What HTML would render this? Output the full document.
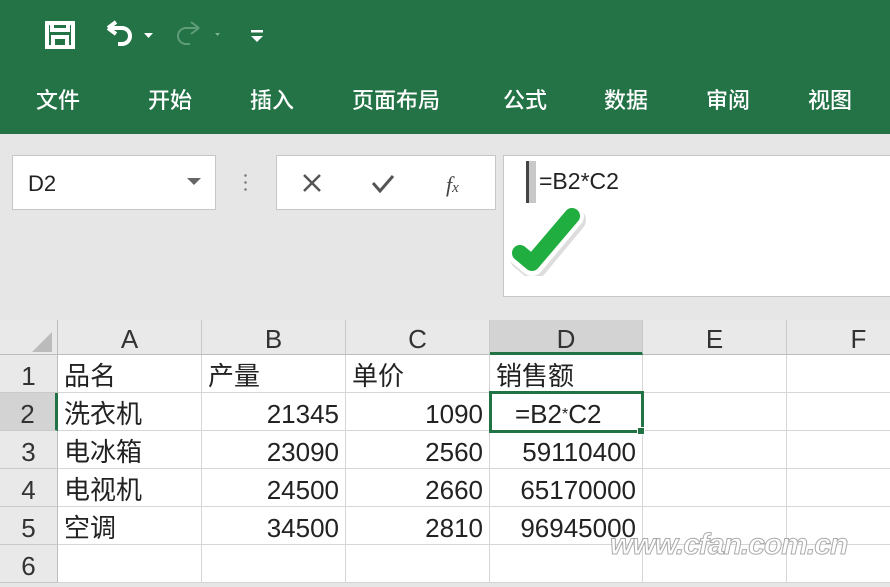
<!DOCTYPE html>
<html><head><meta charset="utf-8"><style>
*{margin:0;padding:0;box-sizing:border-box}
body{width:890px;height:578px;overflow:hidden;background:#e6e6e6;font-family:"Liberation Sans","Noto Sans CJK SC",sans-serif;position:relative}
.top{position:absolute;left:0;top:0;width:890px;height:134px;background:#237346}
.tab{position:absolute;top:83px;color:#fff;font-size:22px;font-weight:500;font-family:"Noto Sans CJK SC",sans-serif}
.box{position:absolute;background:#fff;border:1px solid #c6c6c6}
.ch{position:absolute;top:320px;height:35px;background:#e9e9e9;border-right:1px solid #c9c9c9;border-bottom:1px solid #bdbdbd;font-size:26px;color:#333;text-align:center;line-height:38px}
.rh{position:absolute;left:0;width:58px;height:38px;background:#e9e9e9;border-bottom:1px solid #c9c9c9;border-right:1px solid #bdbdbd;font-size:26px;color:#333;text-align:center;line-height:42px}
.c{position:absolute;height:38px;background:#fff;border-right:1px solid #d6d6d6;border-bottom:1px solid #d6d6d6;font-size:26px;color:#222;line-height:42px;padding:0 6px;white-space:nowrap;font-family:"Liberation Sans","Noto Sans CJK SC",sans-serif}
.r{text-align:right}
</style></head><body>
<div class="top">
<svg width="890" height="70" style="position:absolute;left:0;top:0">
<g fill="none" stroke="#fff" stroke-width="4">
<rect x="47" y="23" width="26" height="24"/><rect x="52" y="23" width="16" height="7"/><rect x="53" y="37" width="14" height="10"/></g>
<path d="M108 28 L116 22 M108 28 L116 34 M108 28 H122 a8 8 0 0 1 0 16 H118" stroke="#fff" stroke-width="4" fill="none"/>
<path d="M144 33 h9 l-4.5 5z" fill="#fff"/>
<path d="M199 28 L191 22 M199 28 L191 34 M199 28 H186 a8 8 0 0 0 0 16 H190" stroke="#5f9c7a" stroke-width="2" fill="none"/>
<path d="M215 33 h5 l-2.5 3z" fill="#7fb092"/>
<rect x="251" y="30" width="12" height="2.5" fill="#fff"/><path d="M251 36 h12 l-6 6z" fill="#fff"/>
</svg>
<div class="tab" style="left:36px">文件</div>
<div class="tab" style="left:148px">开始</div>
<div class="tab" style="left:250px">插入</div>
<div class="tab" style="left:352px">页面布局</div>
<div class="tab" style="left:503px">公式</div>
<div class="tab" style="left:604px">数据</div>
<div class="tab" style="left:706px">审阅</div>
<div class="tab" style="left:808px">视图</div>
</div>
<div class="box" style="left:12px;top:155px;width:204px;height:55px;font-size:22px;line-height:55px;padding-left:15px;color:#222">D2
<svg style="position:absolute;left:174px;top:22px" width="14" height="8"><path d="M0 0h14l-7 7z" fill="#666"/></svg></div>
<div style="position:absolute;left:244px;top:172px;width:3px;height:22px;background:radial-gradient(circle,#777 1px,transparent 1.5px) 0 0/3px 7px"></div>
<div class="box" style="left:276px;top:155px;width:220px;height:55px">
<svg width="220" height="55"><path d="M27 19l16 16M43 19L27 35" stroke="#555" stroke-width="2.5"/><path d="M96 27l7 8 13-15" stroke="#555" stroke-width="3" fill="none"/>
<text x="169" y="36" font-family="Liberation Serif,serif" font-style="italic" font-size="22" fill="#444">f<tspan font-size="15">x</tspan></text></svg></div>
<div class="box" style="left:503px;top:155px;width:400px;height:142px">
<div style="position:absolute;left:22px;top:5px;width:10px;height:42px;background:#c8c8c8;border-left:3px solid #444"></div>
<div style="position:absolute;left:35px;top:12px;font-size:23px;color:#222">=B2*C2</div>
<svg style="position:absolute;left:2px;top:40px" width="85" height="80"><path d="M16 62 L28 72 L68 24" stroke="#bbb" stroke-width="24" stroke-linecap="round" stroke-linejoin="round" fill="none" opacity=".5"/><path d="M14 58 L26 68 L66 20" stroke="#fff" stroke-width="24" stroke-linecap="round" stroke-linejoin="round" fill="none"/><path d="M14 57 L26 67 L66 20" stroke="#1fae3f" stroke-width="16" stroke-linecap="round" stroke-linejoin="round" fill="none"/></svg>
</div>
<div style="position:absolute;left:0;top:320px;width:58px;height:35px;background:#e9e9e9;border-right:1px solid #bdbdbd;border-bottom:1px solid #bdbdbd"><svg width="58" height="35"><path d="M52 32V12L32 32z" fill="#bbb"/></svg></div>
<div class="ch" style="left:58px;width:144px">A</div>
<div class="ch" style="left:202px;width:144px">B</div>
<div class="ch" style="left:346px;width:144px">C</div>
<div class="ch" style="left:490px;width:153px;background:#d3d3d3;border-bottom:3px solid #217346">D</div>
<div class="ch" style="left:643px;width:144px">E</div>
<div class="ch" style="left:787px;width:144px">F</div>
<div class="rh" style="top:355px">1</div>
<div class="rh" style="top:393px;background:#d3d3d3;border-right:3px solid #217346">2</div>
<div class="rh" style="top:431px">3</div>
<div class="rh" style="top:469px">4</div>
<div class="rh" style="top:507px">5</div>
<div class="rh" style="top:545px">6</div>
<div style="position:absolute;left:58px;top:355px;width:832px;height:223px;background:#fff"></div>
<div class="c" style="left:58px;top:355px;width:144px">品名</div><div class="c" style="left:202px;top:355px;width:144px">产量</div><div class="c" style="left:346px;top:355px;width:144px">单价</div><div class="c" style="left:490px;top:355px;width:153px">销售额</div><div class="c" style="left:643px;top:355px;width:144px"></div><div class="c" style="left:787px;top:355px;width:144px"></div>
<div class="c" style="left:58px;top:393px;width:144px">洗衣机</div><div class="c r" style="left:202px;top:393px;width:144px">21345</div><div class="c r" style="left:346px;top:393px;width:144px">1090</div><div class="c" style="left:490px;top:393px;width:153px;padding-left:25px">=B2<span style="font-size:16px;vertical-align:4px">*</span>C2</div><div class="c" style="left:643px;top:393px;width:144px"></div><div class="c" style="left:787px;top:393px;width:144px"></div>
<div class="c" style="left:58px;top:431px;width:144px">电冰箱</div><div class="c r" style="left:202px;top:431px;width:144px">23090</div><div class="c r" style="left:346px;top:431px;width:144px">2560</div><div class="c r" style="left:490px;top:431px;width:153px">59110400</div><div class="c" style="left:643px;top:431px;width:144px"></div><div class="c" style="left:787px;top:431px;width:144px"></div>
<div class="c" style="left:58px;top:469px;width:144px">电视机</div><div class="c r" style="left:202px;top:469px;width:144px">24500</div><div class="c r" style="left:346px;top:469px;width:144px">2660</div><div class="c r" style="left:490px;top:469px;width:153px">65170000</div><div class="c" style="left:643px;top:469px;width:144px"></div><div class="c" style="left:787px;top:469px;width:144px"></div>
<div class="c" style="left:58px;top:507px;width:144px">空调</div><div class="c r" style="left:202px;top:507px;width:144px">34500</div><div class="c r" style="left:346px;top:507px;width:144px">2810</div><div class="c r" style="left:490px;top:507px;width:153px">96945000</div><div class="c" style="left:643px;top:507px;width:144px"></div><div class="c" style="left:787px;top:507px;width:144px"></div>
<div class="c" style="left:58px;top:545px;width:144px"></div><div class="c" style="left:202px;top:545px;width:144px"></div><div class="c" style="left:346px;top:545px;width:144px"></div><div class="c" style="left:490px;top:545px;width:153px"></div><div class="c" style="left:643px;top:545px;width:144px"></div><div class="c" style="left:787px;top:545px;width:144px"></div>
<div style="position:absolute;left:489px;top:391px;width:155px;height:42px;border:3px solid #217346"></div>
<div style="position:absolute;left:637px;top:427px;width:8px;height:8px;background:#217346;border:1px solid #fff"></div>
<div style="position:absolute;left:610px;top:528px;font-size:30px;font-style:italic;font-weight:bold;color:rgba(255,255,255,.85);-webkit-text-stroke:1px #aaa;letter-spacing:-1px">www.cfan.com.cn</div>
</body></html>
